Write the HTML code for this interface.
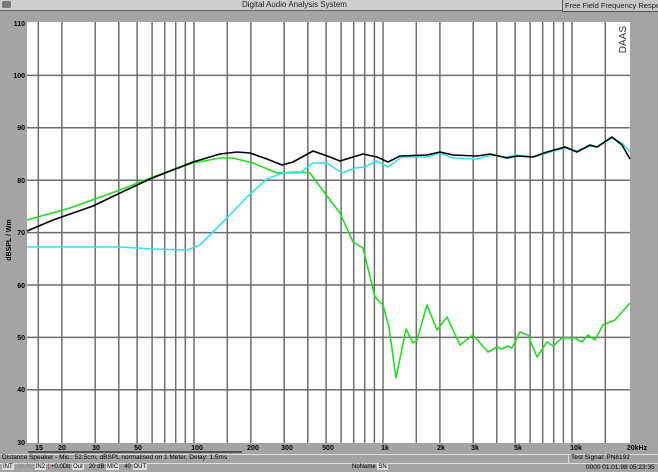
<!DOCTYPE html>
<html><head><meta charset="utf-8"><style>
html,body{margin:0;padding:0}
body{width:658px;height:472px;background:#a4a4a4;position:relative;overflow:hidden;font-family:"Liberation Sans",sans-serif}
.t{position:absolute;font-size:7px;color:#000;white-space:nowrap}
</style></head><body>
<div style="position:absolute;left:0;top:0;width:562px;height:10px;background:#cfcfcf;border-bottom:1px solid #666"></div>
<div class="t" style="left:242px;top:0px;color:#222;font-size:8px">Digital Audio Analysis System</div>
<div style="position:absolute;left:562px;top:0;width:96px;height:11px;background:#c8c8c8;border-left:1px solid #555;border-bottom:1px solid #555"></div>
<div class="t" style="left:565px;top:1px;color:#222;font-size:7.5px">Free Field Frequency Response</div>
<div style="position:absolute;left:2px;top:1px;width:9px;height:7px;background:#777;border-radius:2px"></div>
<svg style="position:absolute;left:0;top:0" width="658" height="472">
<rect x="27" y="22" width="603" height="421" fill="#fff"/>
<g stroke="#6e6e6e" stroke-width="1.5">
<line x1="38.3" y1="22" x2="38.3" y2="443"/><line x1="61.9" y1="22" x2="61.9" y2="443"/><line x1="95.2" y1="22" x2="95.2" y2="443"/><line x1="118.8" y1="22" x2="118.8" y2="443"/><line x1="137.1" y1="22" x2="137.1" y2="443"/><line x1="152.1" y1="22" x2="152.1" y2="443"/><line x1="164.7" y1="22" x2="164.7" y2="443"/><line x1="175.7" y1="22" x2="175.7" y2="443"/><line x1="185.3" y1="22" x2="185.3" y2="443"/><line x1="194" y1="22" x2="194" y2="443"/><line x1="227.3" y1="22" x2="227.3" y2="443"/><line x1="250.9" y1="22" x2="250.9" y2="443"/><line x1="284.2" y1="22" x2="284.2" y2="443"/><line x1="307.8" y1="22" x2="307.8" y2="443"/><line x1="326.1" y1="22" x2="326.1" y2="443"/><line x1="341.1" y1="22" x2="341.1" y2="443"/><line x1="353.7" y1="22" x2="353.7" y2="443"/><line x1="364.7" y1="22" x2="364.7" y2="443"/><line x1="374.4" y1="22" x2="374.4" y2="443"/><line x1="383" y1="22" x2="383" y2="443"/><line x1="416.3" y1="22" x2="416.3" y2="443"/><line x1="439.9" y1="22" x2="439.9" y2="443"/><line x1="473.2" y1="22" x2="473.2" y2="443"/><line x1="496.8" y1="22" x2="496.8" y2="443"/><line x1="515.1" y1="22" x2="515.1" y2="443"/><line x1="530.1" y1="22" x2="530.1" y2="443"/><line x1="542.7" y1="22" x2="542.7" y2="443"/><line x1="553.7" y1="22" x2="553.7" y2="443"/><line x1="563.4" y1="22" x2="563.4" y2="443"/><line x1="572" y1="22" x2="572" y2="443"/><line x1="605.3" y1="22" x2="605.3" y2="443"/>
<line x1="27" y1="75.4" x2="630" y2="75.4"/><line x1="27" y1="127.8" x2="630" y2="127.8"/><line x1="27" y1="180.2" x2="630" y2="180.2"/><line x1="27" y1="232.6" x2="630" y2="232.6"/><line x1="27" y1="285" x2="630" y2="285"/><line x1="27" y1="337.4" x2="630" y2="337.4"/><line x1="27" y1="389.8" x2="630" y2="389.8"/>
</g>
<g fill="none" stroke-width="1.6" stroke-linejoin="round">
<polyline stroke="#22dd22" points="27,220 70,208 120,190 153,177 193,163 220,158 233,158 253,163 277,173 300,172 310,173 327,196 340,213 353,242 363,248 375,297 383,305 389,327 396,378 406,329 413,343 417,340 427,305 437,330 447,317 460,345 473,335 488,352 497,347 502,349 508,346 512,348 520,332 528,335 537,357 547,342 553,346 562,338 575,338 582,342 588,335 595,340 603,325 615,320 630,303"/>
<polyline stroke="#33e4ee" points="27,247 120,247 153,249 187,250 200,245 227,218 247,197 267,179 283,173 300,173 313,163 327,163 342,173 355,168 365,167 377,161 388,167 402,157 427,157 440,153 453,158 477,159 490,155 507,157 517,155 533,157 547,153 565,148 577,151 590,146 597,147 612,138 622,143 630,152"/>
<polyline stroke="#000" points="27,231 53,220 93,206 120,193 150,179 170,171 193,162 220,154 237,152 250,153 267,159 282,165 293,162 313,151 330,157 340,161 363,154 377,157 388,162 400,156 427,155 440,152 453,155 477,156 490,154 507,158 517,156 533,157 547,152 565,147 577,152 590,145 597,147 612,137 622,145 630,159"/>
</g>
<line x1="28" y1="452" x2="242" y2="452" stroke="#000" stroke-width="1"/>
<text x="626" y="26" transform="rotate(-90 626 26)" font-family="Liberation Sans" font-size="10" fill="#333" text-anchor="end">DAAS</text>
<text x="11" y="240" transform="rotate(-90 11 240)" font-family="Liberation Sans" font-size="7" font-weight="bold" fill="#000" text-anchor="middle">dBSPL / Wm</text>
<g font-family="Liberation Sans" font-size="7" font-weight="bold" fill="#000" text-anchor="end">
<text x="25" y="26">110</text><text x="25" y="78">100</text><text x="25" y="130">90</text><text x="25" y="183">80</text><text x="25" y="235">70</text><text x="25" y="288">60</text><text x="25" y="340">50</text><text x="25" y="392">40</text><text x="25" y="445">30</text>
</g>
<g font-family="Liberation Sans" font-size="7" font-weight="bold" fill="#000" text-anchor="middle">
<text x="39" y="450">15</text><text x="62" y="450">20</text><text x="96" y="450">30</text><text x="138" y="450">50</text><text x="197" y="450">100</text><text x="253" y="450">200</text><text x="287" y="450">300</text><text x="328" y="450">500</text><text x="385" y="450">1k</text><text x="441" y="450">2k</text><text x="475" y="450">3k</text><text x="518" y="450">5k</text><text x="576" y="450">10k</text><text x="637" y="450">20kHz</text>
</g>
</svg>
<div style="position:absolute;left:0;top:454px;width:568px;height:8px;border-top:1px solid #ddd;border-bottom:1px solid #ddd;background:#a4a4a4"></div>
<div class="t" style="left:2px;top:454px;font-size:6.5px">Distance Speaker - Mic.: 52.5cm, dBSPL normalised on 1 Meter, Delay: 1.5ms</div>
<div style="position:absolute;left:568px;top:454px;width:90px;height:8px;border-left:1px solid #ddd;border-top:1px solid #ddd;border-bottom:1px solid #ddd"></div>
<div class="t" style="left:571px;top:454px;font-size:6.5px">Test Signal: PN8192</div>
<div class="t" style="left:2px;top:464px;font-size:6px">
<span style="background:#ddd;padding:0 1px">INT</span> <span style="color:#888">-30.0V</span> <span style="background:#ddd;padding:0 1px">IN2</span> <span style="color:#c00">|</span> +0.0Db <span style="background:#ddd;padding:0 1px">Out</span> &nbsp; 20 dB <span style="background:#ddd;padding:0 1px">MIC</span> &nbsp; 40 <span style="background:#ddd;padding:0 1px">OUT</span></div>
<div class="t" style="left:352px;top:464px;font-size:6px">NoName <span style="background:#ddd;padding:0 1px">SN</span></div>
<div class="t" style="left:586px;top:464px;font-size:6.5px">0000 01.01.98 05:23:35</div>
</body></html>
